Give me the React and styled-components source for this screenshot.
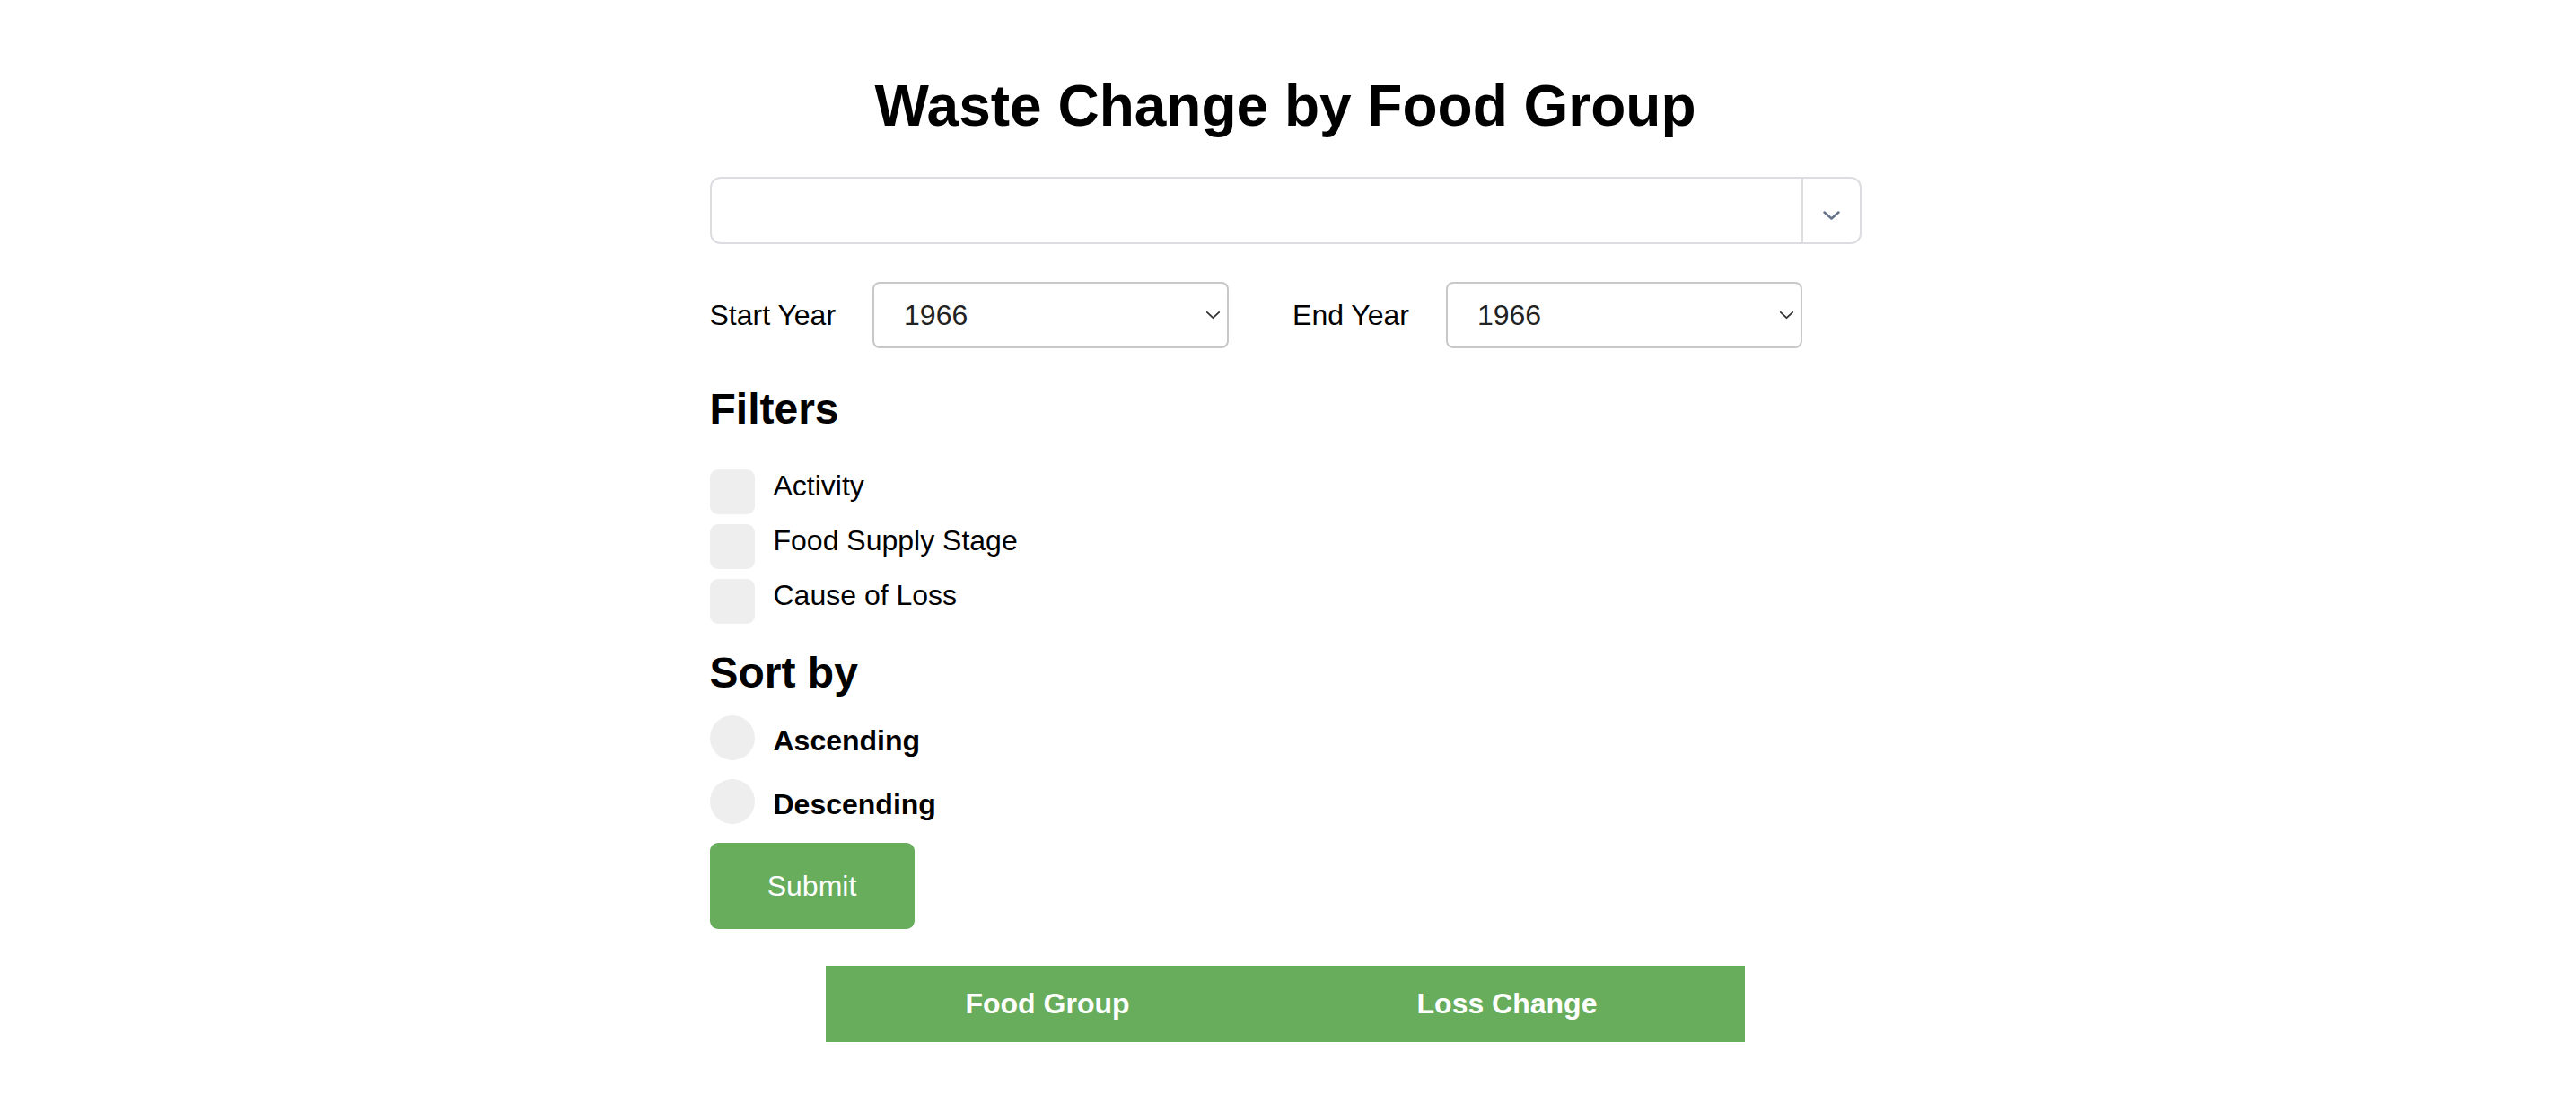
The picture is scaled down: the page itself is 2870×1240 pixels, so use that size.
import React from "react";
import styled, { createGlobalStyle } from "styled-components";

const GlobalStyle = createGlobalStyle`
  html, body {
    margin: 0;
    padding: 0;
    background: #ffffff;
  }
  body {
    font-family: "Liberation Sans", Arial, Helvetica, sans-serif;
    color: #000000;
  }
  * { box-sizing: border-box; }
`;

const GREEN = "#67ad5c";

const Page = styled.div`
  padding: 82px 6px 40px 0;
`;

const Container = styled.div`
  width: 1283px;
  margin: 0 auto;
  display: flex;
  flex-direction: column;
  align-items: flex-start;
`;

const Title = styled.h1`
  align-self: stretch;
  margin: 0 0 43px;
  font-size: 64px;
  line-height: 72px;
  font-weight: 700;
  text-align: center;
`;

const MultiSelect = styled.div`
  align-self: stretch;
  display: flex;
  height: 75px;
  border: 2px solid #dcdde1;
  border-radius: 12px;
  background: #fff;
  margin-bottom: 42px;
`;

const MultiValue = styled.div`
  flex: 1;
`;

const Indicator = styled.div`
  width: 65px;
  padding-top: 10px;
  border-left: 2px solid #dcdde1;
  display: flex;
  align-items: center;
  justify-content: center;
`;

const YearRow = styled.div`
  display: flex;
  align-items: center;
  gap: 71px;
`;

const YearGroup = styled.div`
  display: flex;
  align-items: center;
`;

const YearLabel = styled.span`
  font-size: 32px;
  line-height: 37px;
  margin-right: 41px;
`;

const SelectBox = styled.div`
  width: 397px;
  height: 74px;
  border: 2px solid #c8c8c8;
  border-radius: 8px;
  padding: 0 7px 0 33px;
  display: flex;
  align-items: center;
  justify-content: space-between;
  font-size: 32px;
  color: #222222;
  background: #fff;
`;

const SectionTitle = styled.h2`
  margin: ${(p) => p.$top}px 0 ${(p) => p.$bottom}px;
  font-size: 48px;
  line-height: 56px;
  font-weight: 700;
`;

const OptionList = styled.div`
  display: flex;
  flex-direction: column;
  gap: ${(p) => p.$gap}px;
`;

const OptionRow = styled.label`
  display: flex;
  align-items: flex-start;
  gap: 21px;
`;

const Box = styled.span`
  width: 50px;
  height: 50px;
  flex: none;
  background: #eeeeee;
  border-radius: ${(p) => (p.$round ? "50%" : "9px")};
`;

const OptionText = styled.span`
  font-size: 32px;
  font-weight: ${(p) => (p.$bold ? 700 : 400)};
  line-height: ${(p) => (p.$bold ? "44px" : "37px")};
  margin-top: ${(p) => (p.$bold ? "6px" : "0")};
`;

const SubmitButton = styled.button`
  margin-top: 21px;
  width: 228px;
  height: 96px;
  border: none;
  border-radius: 9px;
  background: ${GREEN};
  color: #ffffff;
  font-family: inherit;
  font-size: 32px;
`;

const Table = styled.table`
  align-self: center;
  margin-top: 41px;
  width: 1024px;
  border-collapse: collapse;
`;

const HeadCell = styled.th`
  width: ${(p) => p.$w}px;
  height: 85px;
  padding: 0;
  background: ${GREEN};
  color: #ffffff;
  font-size: 32px;
  font-weight: 700;
  text-align: center;
`;

const Chevron = ({ w, h, sw, color }) => (
  <svg width={w} height={h} viewBox={`0 0 ${w} ${h}`} fill="none">
    <path
      d={`M${sw} ${sw} L${w / 2} ${h - sw} L${w - sw} ${sw}`}
      stroke={color}
      strokeWidth={sw}
      strokeLinecap="round"
      strokeLinejoin="round"
    />
  </svg>
);

const YearSelect = ({ label, value }) => (
  <YearGroup>
    <YearLabel>{label}</YearLabel>
    <SelectBox>
      <span>{value}</span>
      <Chevron w={17} h={10} sw={1.8} color="#333" />
    </SelectBox>
  </YearGroup>
);

export default function App() {
  const filters = ["Activity", "Food Supply Stage", "Cause of Loss"];
  const sorts = ["Ascending", "Descending"];
  return (
    <>
      <GlobalStyle />
      <Page>
        <Container>
          <Title>Waste Change by Food Group</Title>
          <MultiSelect>
            <MultiValue />
            <Indicator>
              <Chevron w={21} h={12} sw={2.6} color="#66738a" />
            </Indicator>
          </MultiSelect>
          <YearRow>
            <YearSelect label="Start Year" value="1966" />
            <YearSelect label="End Year" value="1966" />
          </YearRow>
          <SectionTitle $top={40} $bottom={39}>Filters</SectionTitle>
          <OptionList $gap={11}>
            {filters.map((f) => (
              <OptionRow key={f}>
                <Box />
                <OptionText>{f}</OptionText>
              </OptionRow>
            ))}
          </OptionList>
          <SectionTitle $top={27} $bottom={19}>Sort by</SectionTitle>
          <OptionList $gap={21}>
            {sorts.map((s) => (
              <OptionRow key={s}>
                <Box $round />
                <OptionText $bold>{s}</OptionText>
              </OptionRow>
            ))}
          </OptionList>
          <SubmitButton>Submit</SubmitButton>
          <Table>
            <thead>
              <tr>
                <HeadCell $w={494}>Food Group</HeadCell>
                <HeadCell $w={530}>Loss Change</HeadCell>
              </tr>
            </thead>
          </Table>
        </Container>
      </Page>
    </>
  );
}
